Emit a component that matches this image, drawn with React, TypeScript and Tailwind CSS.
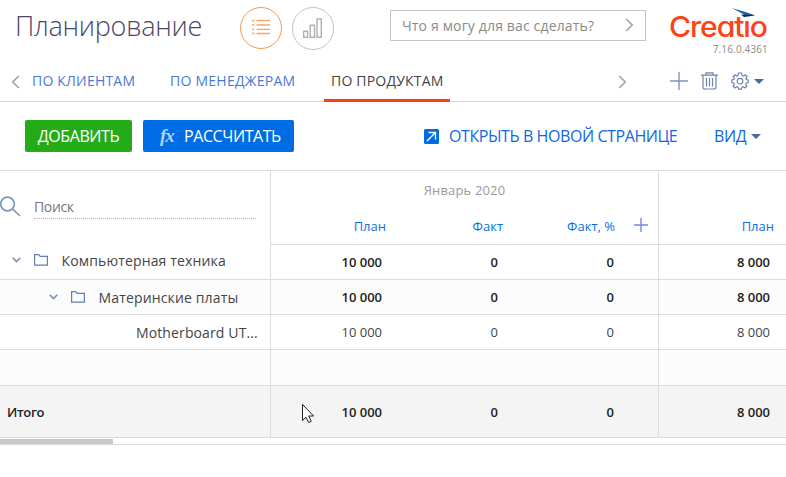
import React from "react";

const line = "border-[#dcdcdc]";

function Plus({ size, color }: { size: number; color: string }) {
  return (
    <svg width={size} height={size} viewBox={`0 0 ${size} ${size}`} stroke={color} strokeWidth="1.4" className="block shrink-0">
      <path d={`M${size / 2} 0V${size}M0 ${size / 2}H${size}`} />
    </svg>
  );
}

function Arrow({ left }: { left?: boolean }) {
  return (
    <svg width="9" height="14" viewBox="0 0 9 14" fill="none" stroke="#a3a3a3" strokeWidth="1.7" className="block shrink-0">
      <path d={left ? "M7.8 1L1.8 7L7.8 13" : "M1.2 1L7.2 7L1.2 13"} />
    </svg>
  );
}

function Caret() {
  return (
    <svg width="10" height="5" viewBox="0 0 10 5" fill="#4a67a0" className="block shrink-0">
      <path d="M0 0H10L5 5Z" />
    </svg>
  );
}

function Logo() {
  return (
    <svg width="100" height="36" viewBox="0 0 100 36" className="block">
      <text
        x="-1"
        y="28.5"
        textLength="98"
        lengthAdjust="spacingAndGlyphs"
        letterSpacing="-1"
        fill="#fc4316"
        fontFamily="Inter, Lato, sans-serif"
        fontSize="28.5"
        fontWeight="500"
        style={{ fontFeatureSettings: "'cv11'" }}
      >
        Creatio
      </text>
      <path d="M73.8 5H82V12H73.8Z" fill="#fff" />
      <path d="M62 0L77 4.5L85 7.2L77.5 8.5Z" fill="#1c62a8" />
      <path d="M71 6.5L85 7.2L74 9Z" fill="#0b2442" />
    </svg>
  );
}

function Header() {
  return (
    <header className="flex h-[62px] items-start">
      <h1 className="mt-[7px] ml-[15px] w-[225px] text-[27px] leading-[38px] font-light tracking-[-0.25px] whitespace-nowrap text-[#4b4769]">
        Планирование
      </h1>
      <div className="mt-[7px] flex h-[42px] w-[42px] items-center justify-center rounded-full border border-[#f59a4c]">
        <svg width="18" height="16" viewBox="0 0 18 16" stroke="#f5a661" strokeWidth="1.3" className="-mt-[2px]">
          <path d="M0 1.5H2.5M4.5 1.5H18M0 6H2.5M4.5 6H18M0 10.3H2.5M4.5 10.3H18M0 14.5H2.5M4.5 14.5H18" />
        </svg>
      </div>
      <div className="mt-[7px] ml-[10px] flex h-[43px] w-[42px] items-center justify-center rounded-full border border-[#c4c4c4]">
        <svg width="19" height="20" viewBox="0 0 19 20" fill="none" stroke="#b0b0b0" strokeWidth="1.4" className="mt-[-2px] ml-[-2px]">
          <path d="M.7 13.3H4.6V19.3H.7ZM7.2 7.3H11.5V19.3H7.2ZM14 1H18.3V19.3H14Z" />
        </svg>
      </div>
      <div className="mt-[10px] ml-[56px] flex h-[31px] w-[256px] items-center justify-between border border-[#c4c4c4] pr-[11px] pl-[11px] text-[14px] text-[#8a8a8a]">
        <span className="tracking-[0.15px] whitespace-nowrap">Что я могу для вас сделать?</span>
        <span className="-mt-[2px]">
          <Arrow />
        </span>
      </div>
      <div className="mt-[8px] ml-[24px] w-[98px]">
        <Logo />
        <div className="text-right text-[10px] leading-[10px] tracking-[0.15px] text-[#8c8c8c]">7.16.0.4361</div>
      </div>
    </header>
  );
}

function Tabs() {
  return (
    <nav className="flex h-[40px] items-start border-b border-[#d5d5d5] text-[14px] leading-[20px] text-[#4c78d8]">
      <div className="mt-[13px] ml-[11px] w-[21px]">
        <Arrow left />
      </div>
      <div className="mt-[9px] w-[138px] tracking-[0.2px] whitespace-nowrap">ПО КЛИЕНТАМ</div>
      <div className="mt-[9px] w-[154px] tracking-[0.25px] whitespace-nowrap">ПО МЕНЕДЖЕРАМ</div>
      <div className="h-[40px] w-[126px] shrink-0 border-b-[3px] border-[#fa3e17] pt-[9px] pl-[7px] tracking-[0.2px] whitespace-nowrap text-[#444]">
        ПО ПРОДУКТАМ
      </div>
      <div className="mt-[13px] ml-[168px] w-[52px]">
        <Arrow />
      </div>
      <div className="mt-[10px] flex items-center">
        <Plus size={18} color="#7f96bb" />
        <svg width="17" height="18" viewBox="0 0 17 18" fill="none" stroke="#6b84ad" strokeWidth="1.2" className="ml-[13px]">
          <path d="M0 3.2H17M5 3V.8H12V3M2 3.5V15Q2 17 4 17H13Q15 17 15 15V3.5M5.5 6V14.5M8.5 6V14.5M11.5 6V14.5" />
        </svg>
        <svg width="18" height="18" viewBox="0 0 18 18" fill="none" stroke="#6b84ad" strokeWidth="1.2" className="ml-[13px]">
          <path d="M7.5 1H10.5L11 3.3L12.6 4L14.5 2.7L16.1 4.7L14.9 6.4L15.3 7.5L17.2 8V10.5L15.2 11L14.7 12.4L15.8 14.2L14 16L12.2 14.7L10.9 15.2L10.4 17.2H7.6L7.1 15.2L5.8 14.7L4 16L2.1 14.2L3.3 12.4L2.8 11L.8 10.5V8L2.8 7.4L3.3 6.2L2.1 4.5L4 2.7L5.7 4L7 3.4Z" />
          <circle cx="9" cy="9.2" r="2.8" />
        </svg>
        <span className="ml-[5px]">
          <Caret />
        </span>
      </div>
    </nav>
  );
}

function Toolbar() {
  return (
    <div className={`flex h-[69px] items-start border-b ${line} pt-[18px] text-[16px]`}>
      <button className="ml-[25px] h-[32px] w-[107px] rounded-[2px] bg-[#23ab18] tracking-[-0.4px] whitespace-nowrap text-white">
        ДОБАВИТЬ
      </button>
      <button className="ml-[11px] flex h-[32px] w-[151px] items-center rounded-[2px] bg-[#006ce4] pl-[17px] text-white">
        <span className="w-[24px] text-left font-['Liberation_Serif',serif] text-[19px] leading-[20px] font-bold tracking-[-1px] text-[#b4d3f6] italic">
          fx
        </span>
        <span className="tracking-[-0.42px] whitespace-nowrap">РАССЧИТАТЬ</span>
      </button>
      <div className="ml-[130px] flex h-[32px] items-center text-[#1068df]">
        <svg width="15" height="15" viewBox="0 0 15 15" className="block shrink-0">
          <rect width="15" height="15" rx="1.5" fill="#006ce4" />
          <path d="M3 12L11 4M4.5 3.5H11.5V10.5" fill="none" stroke="#fff" strokeWidth="1.3" />
        </svg>
        <span className="ml-[10px] w-[265px] tracking-[-0.42px] whitespace-nowrap">ОТКРЫТЬ В НОВОЙ СТРАНИЦЕ</span>
        <span className="w-[37px] tracking-[-0.4px]">ВИД</span>
        <Caret />
      </div>
    </div>
  );
}

function TableHead() {
  return (
    <div className="flex h-[74px]">
      <div className={`flex w-[271px] shrink-0 items-start border-r ${line}`}>
        <svg width="21" height="21" viewBox="0 0 21 21" fill="none" stroke="#7f96bb" strokeWidth="1.7" className="mt-[25px]">
          <circle cx="7.5" cy="8" r="6.8" />
          <path d="M12.4 12.9L20 20" />
        </svg>
        <div className="mt-[25px] ml-[13px] h-[23px] w-[222px] border-b border-dotted border-[#b4b4b4] text-[14px] leading-[22px] tracking-[-0.35px] text-[#777]">
          Поиск
        </div>
      </div>
      <div className={`w-[388px] shrink-0 border-r border-b ${line} text-[13px]`}>
        <div className="pt-[10px] text-center leading-[18px] tracking-[0.15px] text-[#9b9b9b]">Январь 2020</div>
        <div className="mt-[18px] flex leading-[18px] text-[#0a6fde]">
          <span className="w-[115px] text-right">План</span>
          <span className="w-[117px] text-right">Факт</span>
          <span className="w-[112px] text-right whitespace-nowrap">Факт, %</span>
          <span className="mt-[1px] ml-[19px]">
            <Plus size={14} color="#6f8fce" />
          </span>
        </div>
      </div>
      <div className={`w-[127px] border-b ${line} pt-[46px] pr-[12px] text-right text-[13px] leading-[18px] text-[#0a6fde]`}>
        План
      </div>
    </div>
  );
}

type RowProps = {
  height: string;
  bg?: string;
  numbers?: string[];
  numClass?: string;
  children?: React.ReactNode;
};

function Row({ height, bg = "", numbers = ["", "", "", ""], numClass = "", children }: RowProps) {
  const num = `pt-[2px] text-right text-[13px] whitespace-pre ${numClass}`;
  return (
    <div className={`flex border-b ${line} ${height} ${bg}`}>
      <div className={`flex w-[271px] shrink-0 items-center border-r ${line} text-[14px] text-[#444]`}>{children}</div>
      <div className={`flex w-[388px] shrink-0 items-center border-r ${line}`}>
        <span className={`w-[111px] ${num}`}>{numbers[0]}</span>
        <span className={`w-[116px] ${num}`}>{numbers[1]}</span>
        <span className={`w-[116px] ${num}`}>{numbers[2]}</span>
      </div>
      <div className="flex w-[127px] items-center">
        <span className={`w-[111px] ${num}`}>{numbers[3]}</span>
      </div>
    </div>
  );
}

function FolderLabel({ indent, text }: { indent: string; text: string }) {
  return (
    <div className={`flex items-center ${indent}`}>
      <svg width="9" height="6" viewBox="0 0 9 6" fill="none" stroke="#7890b8" strokeWidth="1.6" className="block">
        <path d="M.7 .7L4.5 4.5L8.3 .7" />
      </svg>
      <svg width="14" height="12" viewBox="0 0 14 12" fill="none" stroke="#637fae" strokeWidth="1.2" className="ml-[13px] block">
        <path d="M.6 .6H4.7L6.2 2.4H13.4V11.2H.6Z" />
      </svg>
      <span className="ml-[13.5px] tracking-[0.15px] whitespace-nowrap">{text}</span>
    </div>
  );
}

const strong = "font-semibold text-[#222]";

export default function App() {
  return (
    <div className="relative h-[477px] w-[786px] overflow-hidden bg-white font-['Open_Sans','Noto_Sans',sans-serif]">
      <Header />
      <Tabs />
      <Toolbar />
      <TableHead />
      <Row height="h-[35px]" numbers={["10 000", "0", "0", "8 000"]} numClass={strong}>
        <FolderLabel indent="pl-[12px] -mt-[4px]" text="Компьютерная техника" />
      </Row>
      <Row height="h-[35px]" bg="bg-[#fcfcfc]" numbers={["10 000", "0", "0", "8 000"]} numClass={strong}>
        <FolderLabel indent="pl-[49px]" text="Материнские платы" />
      </Row>
      <Row height="h-[35px]" numbers={["10 000", "0", "0", "8 000"]} numClass="text-[#444]">
        <span className="pl-[136px] tracking-[0.12px] whitespace-nowrap">Motherboard UT...</span>
      </Row>
      <Row height="h-[36px]" bg="bg-[#fcfcfc]" />
      <Row height="h-[52px]" bg="bg-[#f4f4f4]" numbers={["10 000", "0", "0", "8 000"]} numClass={strong}>
        <span className="pt-[2px] pl-[7px] text-[13px] font-semibold tracking-[-0.3px] text-[#222]">Итого</span>
      </Row>
      <div className={`h-[7px] border-b ${line} pt-px`}>
        <div className="h-[5px] w-[113px] bg-[#c9c9c9]" />
      </div>
      <svg width="14" height="21" viewBox="0 0 14 21" className="absolute top-[403px] left-[301px]">
        <path d="M1.5 1.5V17.5L5 14.2L7.7 19.5L10.2 18.3L7.7 13H12.6Z" fill="#fff" stroke="#1d1d28" strokeWidth="1" />
      </svg>
    </div>
  );
}
